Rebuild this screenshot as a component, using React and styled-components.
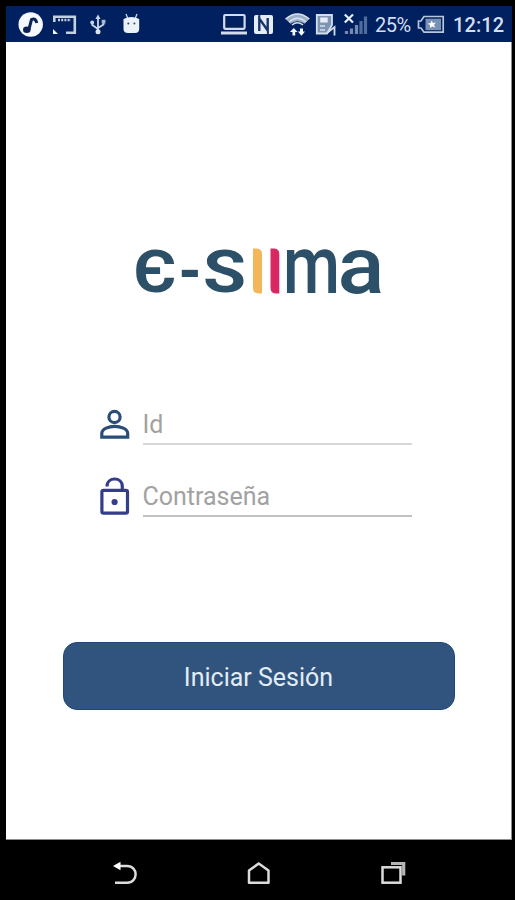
import React from "react";
import styled, { createGlobalStyle } from "styled-components";

const GlobalStyle = createGlobalStyle`
  * {
    box-sizing: border-box;
  }

  body {
    margin: 0;
    background: #000000;
    font-family: Roboto, "Liberation Sans", sans-serif;
  }
`;

const Phone = styled.div`
  display: flex;
  flex-direction: column;
  width: 515px;
  height: 900px;
  padding: 6px 3px 0 6px;
  background: #000000;
`;

const StatusBar = styled.header`
  display: flex;
  align-items: center;
  height: 36px;
  flex: none;
  background: #00205f;
  color: #d3dfec;
`;

const StatusIcon = styled.svg`
  display: block;
  flex: none;
  height: 26px;
  margin-left: ${(props) => props.$gap}px;
`;

const StatusText = styled.span`
  flex: none;
  width: ${(props) => props.$width}px;
  margin-left: ${(props) => props.$gap}px;
  padding-top: 2px;
  font-size: 20px;
  font-weight: ${(props) => (props.$strong ? 500 : 400)};
  letter-spacing: ${(props) => (props.$strong ? 0.1 : -0.5)}px;
  line-height: 24px;
  white-space: nowrap;
`;

const Screen = styled.main`
  display: flex;
  flex-direction: column;
  align-items: center;
  flex: none;
  height: 798px;
  padding-top: 200px;
  background: #ffffff;
  border-right: 1px solid #8d8d8d;
  border-bottom: 1px solid #8d8d8d;
`;

const Logo = styled.svg`
  display: block;
  width: 256px;
  height: 60px;
  flex: none;
  overflow: visible;
  fill: #2b5068;
  font-family: Roboto, "Liberation Sans", sans-serif;
  font-weight: 500;
`;

const Form = styled.form`
  display: flex;
  flex-direction: column;
  align-items: center;
  width: 100%;
  margin-top: 98px;
`;

const Field = styled.label`
  display: flex;
  align-items: flex-start;
  width: 313px;
  height: 45px;
  margin: 0 0 27px -7px;
`;

const FieldIcon = styled.svg`
  display: block;
  flex: none;
  width: 32px;
  height: 44px;
  margin-right: 12px;
  overflow: visible;
`;

const Input = styled.input`
  flex: 1;
  min-width: 0;
  height: 45px;
  padding: 6px 0 0;
  border: 0;
  border-bottom: 2px solid ${(props) => props.$line};
  outline: none;
  background: transparent;
  color: #555555;
  font: 400 25px/32px Roboto, "Liberation Sans", sans-serif;

  &::placeholder {
    color: #a2a2a2;
    opacity: 1;
  }
`;

const Button = styled.button`
  width: 392px;
  height: 68px;
  margin-top: 98px;
  padding: 3px 0 0;
  border: 1px solid #204778;
  border-radius: 14px;
  background: #31547f;
  color: #e2edf5;
  font: 400 25px/30px Roboto, "Liberation Sans", sans-serif;
  cursor: pointer;
`;

const NavBar = styled.nav`
  display: flex;
  align-items: center;
  flex: 1;
  padding: 7px 0 0 105px;
  gap: 106px;
`;

const NavIcon = styled.svg`
  display: block;
  width: 28px;
  height: 28px;
  fill: none;
  stroke: #dcdcdc;
  stroke-width: 2.5;
`;

// status bar icons share one 26px tall strip, x runs along the bar
const Icon = ({ x, width, gap, children }) => (
  <StatusIcon
    $gap={gap}
    width={width}
    viewBox={`${x} 11 ${width} 26`}
    fill="none"
    aria-hidden="true"
  >
    {children}
  </StatusIcon>
);

const Status = () => (
  <StatusBar>
    <Icon x={18} width={26} gap={12}>
      <circle cx="30.7" cy="24.5" r="12.2" fill="#f5f8fc" />
      <ellipse cx="26.8" cy="29.7" rx="3.8" ry="3.2" fill="#0b2354" />
      <path d="M28.9 29.5L31.5 19.5Q35.5 17.5 36.8 23" stroke="#0b2354" strokeWidth="3" />
    </Icon>
    <Icon x={52} width={26} gap={8}>
      <path d="M54.3 22V16.8H74.8V32.8H66" stroke="#c3d0e2" strokeWidth="2.6" />
      <path d="M58 20H71" stroke="#c3d0e2" strokeWidth="2.5" strokeDasharray="2 1.2" />
      <path d="M53 29V34H58Z" fill="#f0f5fa" />
    </Icon>
    <Icon x={89} width={18} gap={11}>
      <path d="M98 17V32M98 29L92.3 25V22M98 28L103.5 24.5V21" stroke="#c9d6e7" strokeWidth="1.8" />
      <path d="M95.4 19L98 14.5L100.6 19Z" fill="#c9d6e7" />
      <circle cx="98" cy="31.7" r="2.5" fill="#dce6f1" />
      <circle cx="92.2" cy="22.5" r="1.9" fill="#c9d6e7" />
      <rect x="101.7" y="19.8" width="3.7" height="3.7" fill="#a9bad2" />
    </Icon>
    <Icon x={122} width={19} gap={15}>
      <path d="M126 14L128 19M137 14L135 19" stroke="#cbd8e8" strokeWidth="1.3" />
      <path d="M123.5 19Q131.3 15 139.2 19V29Q139.2 33 135 33H128Q123.5 33 123.5 29Z" fill="#eaf1f7" />
      <circle cx="128.3" cy="23.5" r="1" fill="#274878" />
      <circle cx="134.4" cy="23.5" r="1" fill="#274878" />
    </Icon>
    <Icon x={220} width={28} gap={79}>
      <rect x="224.2" y="15" width="20.4" height="13.8" rx="1" stroke="#d2dcea" strokeWidth="2.2" />
      <path d="M221 33H247" stroke="#d2dcea" strokeWidth="3" />
    </Icon>
    <Icon x={253} width={21} gap={5}>
      <rect x="254" y="15" width="19" height="19" rx="2" fill="#e4ecf5" />
      <path d="M259.3 31V18.5L267.7 30.5V18" stroke="#173568" strokeWidth="2.4" />
      <path d="M259.5 15V18M267.7 31V34" stroke="#173568" strokeWidth="1.5" />
    </Icon>
    <Icon x={284} width={27} gap={10}>
      <path d="M285.5 19Q297.5 8.5 309.3 19L304.5 23.8Q297.5 18.5 290.5 23.8Z" fill="#9cafc9" />
      <path d="M285.5 19Q297.5 9 309.3 19M289 22Q297.5 14.5 306 22M292 25Q297.5 20.5 303 25" stroke="#d8e1ec" strokeWidth="1.5" />
      <path d="M290 32L293.8 28L297.5 32H295.2V35.5H292.5V32Z" fill="#f4f8fb" />
      <path d="M297.8 31.5H300V28.5H303V31.5H305L301.5 35.7Z" fill="#f4f8fb" />
    </Icon>
    <Icon x={315} width={23} gap={4}>
      <path d="M316.8 15H332V25L327 33.5H316.8Z" fill="#7e95b4" stroke="#d4deea" strokeWidth="1.8" />
      <rect x="320.2" y="17.5" width="7.5" height="5" fill="#e6edf5" />
      <path d="M320 26H325M320 30H325" stroke="#d4deea" strokeWidth="1.5" />
      <path d="M327 33L334.5 27V35.5" stroke="#d4deea" strokeWidth="1.8" />
    </Icon>
    <Icon x={343} width={26} gap={5}>
      <path d="M344.8 14.5L353 22.5M353 14.5L344.8 22.5" stroke="#e8eff6" strokeWidth="2.2" />
      <path d="M346.5 34V31M351.5 34V28.5M356.5 34V25" stroke="#748baf" strokeWidth="3.2" />
      <path d="M361 34V21M365.5 34V16.5" stroke="#4f6d9c" strokeWidth="3.2" />
    </Icon>
    <StatusText $gap={6} $width={38}>25%</StatusText>
    <Icon x={416} width={30} gap={3}>
      <path d="M424 16.5H443.2V32.2H424L421 28H418.5V21H421Z" fill="#00205f" stroke="#b8c7d9" strokeWidth="1.7" />
      <rect x="425.5" y="18.7" width="15.5" height="11.5" fill="#7890b3" />
      <path d="M431.5 20.5L433 23L435.8 22.5L434 25L435.3 27.5L432.3 26.5L430 28V25L427.5 23.7L430.7 23Z" fill="#fafcff" />
    </Icon>
    <StatusText $gap={7} $width={52} $strong>12:12</StatusText>
  </StatusBar>
);

const Brand = () => (
  <Logo viewBox="131 242 256 60" role="img" aria-label="E-SIIMA">
    <text x="133.5" y="292.3" fontSize="60" fontWeight="700" textLength="43" lengthAdjust="spacingAndGlyphs">
      Є
    </text>
    <text x="178.5" y="293" fontSize="64" fontWeight="700" textLength="23" lengthAdjust="spacingAndGlyphs">
      -
    </text>
    <text x="203" y="292.3" fontSize="60" fontWeight="700" textLength="43" lengthAdjust="spacingAndGlyphs">
      S
    </text>
    <path d="M253 248.5H257Q262 249 262 254V293.5H258Q253 293 253 288Z" fill="#f3b75a" />
    <path d="M270.5 248.5H274.5Q279.3 249 279.3 254V293.5H275.5Q270.5 293 270.5 288Z" fill="#d92762" />
    <text x="283" y="293.3" fontSize="81" textLength="57" lengthAdjust="spacingAndGlyphs">
      m
    </text>
    <text x="337.5" y="292.7" fontSize="80" textLength="47" lengthAdjust="spacingAndGlyphs">
      a
    </text>
  </Logo>
);

const App = () => (
  <>
    <GlobalStyle />
    <Phone>
      <Status />
      <Screen>
        <Brand />
        <Form onSubmit={(e) => e.preventDefault()}>
          <Field>
            <FieldIcon viewBox="99 400 32 44" fill="none" stroke="#294d79" strokeWidth="3.2">
              <circle cx="114.5" cy="417" r="5.6" />
              <path d="M101.8 437.2V433.5C101.8 428.7 109 426.3 114.7 426.3S127.7 428.7 127.7 433.5V437.2Z" />
            </FieldIcon>
            <Input $line="#d8d8d8" placeholder="Id" />
          </Field>
          <Field>
            <FieldIcon viewBox="99 472 32 44" fill="none" stroke="#343d8c" strokeWidth="3.2">
              <rect x="101.9" y="490.4" width="25.6" height="22.8" rx="1.7" />
              <path d="M107 486.5C107 476.5 122.3 476.5 122.3 486.5V490" />
              <circle cx="114.6" cy="502" r="3.1" fill="#343d8c" stroke="none" />
            </FieldIcon>
            <Input $line="#c2c2c2" type="password" placeholder="Contraseña" />
          </Field>
          <Button type="submit">Iniciar Sesión</Button>
        </Form>
      </Screen>
      <NavBar>
        <NavIcon viewBox="111 860 28 28">
          <path d="M119 866H127C138.5 866 138.5 882.7 127 882.7H115" />
          <path d="M113 866L120.5 861.8V870.2Z" fill="#ffffff" stroke="none" />
        </NavIcon>
        <NavIcon viewBox="245 860 28 28">
          <path d="M249 870.5L258.7 863.5L268.5 870.5V882.7H249Z" strokeLinejoin="round" />
        </NavIcon>
        <NavIcon viewBox="379 860 28 28">
          <path d="M391 863.5H403.7V875.5" stroke="#b5b5b5" strokeWidth="3.2" />
          <rect x="382.5" y="867.3" width="18" height="15.4" />
        </NavIcon>
      </NavBar>
    </Phone>
  </>
);

export default App;
